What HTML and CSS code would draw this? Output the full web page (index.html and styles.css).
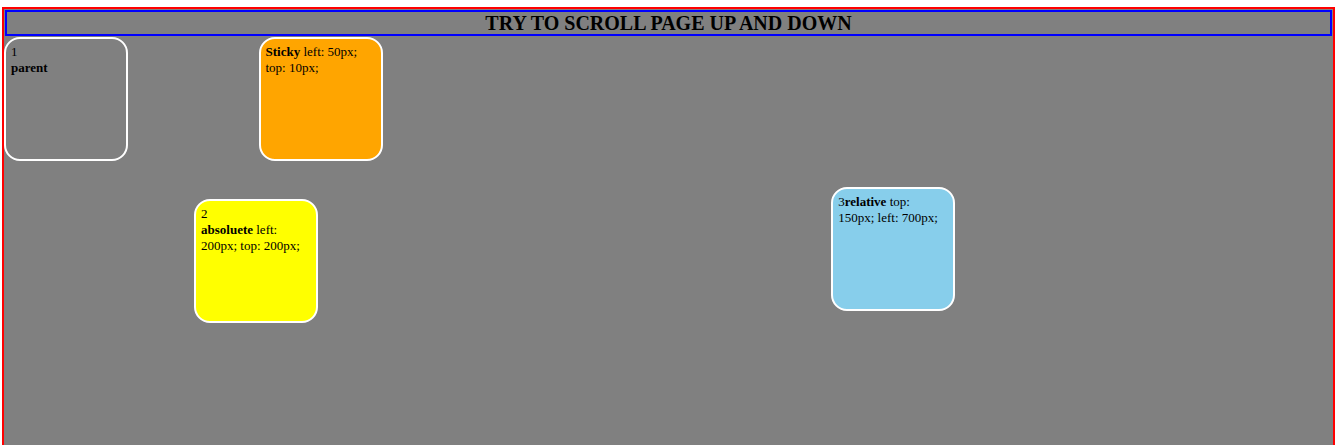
FILE: index.html
```html
<!DOCTYPE html>
<html lang="en">
<head>
<meta charset="utf-8">
<title>CSS positions</title>
<link rel="stylesheet" href="styles.css">
</head>
<body>
<main class="page">
  <h1 class="title">TRY TO SCROLL PAGE UP AND DOWN</h1>
  <div class="boxes">
    <div class="box parent">1<br><b>parent</b></div>
    <div class="box relative">3<b>relative</b> top: 150px; left: 700px;</div>
    <div class="box sticky"><b>Sticky</b> left: 50px; top: 10px;</div>
    <div class="box absolute">2<br><b>absoluete</b> left: 200px; top: 200px;</div>
  </div>
</main>
</body>
</html>
```
FILE: styles.css
```css
* {
  box-sizing: border-box;
}

body {
  margin: 7px 1px 7px 2px;
  font-family: "Liberation Serif", "Times New Roman", serif;
  font-size: 13px;
  line-height: 16px;
  color: black;
  background: white;
}

.page {
  min-height: 200vh;
  border: 2px solid red;
  background: gray;
}

.title {
  margin: 1px;
  border: 2px solid blue;
  font-size: 20px;
  line-height: 22px;
  text-align: center;
}

.boxes {
  position: relative;
}

.box {
  display: inline-block;
  vertical-align: top;
  width: 124px;
  height: 124px;
  padding: 5px;
  border: 2px solid white;
  border-radius: 16px;
}

.relative {
  position: relative;
  top: 150px;
  left: 700px;
  background: skyblue;
}

.sticky {
  position: sticky;
  top: 10px;
  left: 50px;
  background: orange;
}

.absolute {
  position: absolute;
  top: 162px;
  left: 190px;
  background: yellow;
}
```
